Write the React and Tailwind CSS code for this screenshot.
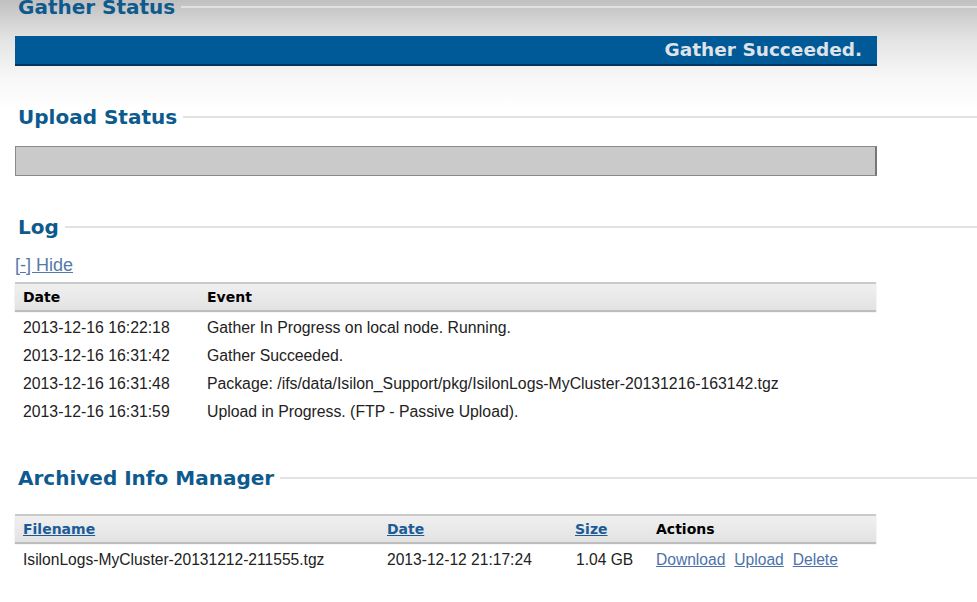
import React from 'react';

const heading = { fontFamily: '"DejaVu Sans", Verdana, sans-serif' };
const body = { fontFamily: '"Liberation Sans", Tahoma, Arial, sans-serif' };

const SectionTitle = ({ children, className = '' }) => (
	<div className={`flex items-center h-6 ${className}`}>
		<h2 style={heading} className="pl-[3px] pr-[6px] text-[20px] font-bold leading-6 text-[#0d5a8e] whitespace-nowrap">
			{children}
		</h2>
		<div className="flex-1 h-[2px] bg-[#e2e2e2]" />
	</div>
);

const TableHead = ({ children }) => (
	<div
		style={heading}
		className="flex w-[861px] h-[28px] items-center border-t-2 border-[#c9c9c9] bg-gradient-to-b from-[#f0f0f0] to-[#e3e3e3] shadow-[0_2px_1px_#bdbdbd] text-[14px] font-bold text-black"
	>
		{children}
	</div>
);

const logRows = [
	['2013-12-16 16:22:18', 'Gather In Progress on local node. Running.'],
	['2013-12-16 16:31:42', 'Gather Succeeded.'],
	['2013-12-16 16:31:48', 'Package: /ifs/data/Isilon_Support/pkg/IsilonLogs-MyCluster-20131216-163142.tgz'],
	['2013-12-16 16:31:59', 'Upload in Progress. (FTP - Passive Upload).'],
];

export default function App() {
	return (
		<div className="min-h-[602px] w-[977px] overflow-hidden bg-[linear-gradient(to_bottom,#c0c0c0_0px,#e4e4e4_40px,#f8f8f8_80px,#ffffff_110px)]">
			<div className="pl-[15px]">
				{/* Gather Status */}
				<SectionTitle className="mt-[-5px]">Gather Status</SectionTitle>
				<div className="mt-[17px] w-[862px] h-[30px] bg-[#005a97] border-b-2 border-[#00365e] flex items-center justify-end pr-[15px]">
					<span style={heading} className="text-[18.5px] font-bold text-[#dfe3e8]">Gather Succeeded.</span>
				</div>

				{/* Upload Status */}
				<SectionTitle className="mt-[39px]">Upload Status</SectionTitle>
				<div className="mt-[17px] w-[862px] h-[30px] bg-[#cacaca] border border-[#8a8a8a] border-r-2 border-r-[#777]" />

				{/* Log */}
				<SectionTitle className="mt-[39px]">Log</SectionTitle>
				<div className="mt-[16px] h-5 leading-5">
					<a href="#" style={body} className="text-[18px] text-[#5679ab] underline">[-] Hide</a>
				</div>
				<div className="mt-[7px]">
					<TableHead>
						<div className="w-[192px] pl-2">Date</div>
						<div className="flex-1">Event</div>
					</TableHead>
					<div className="mt-1">
						{logRows.map(([date, event]) => (
							<div key={date} style={body} className="flex h-[28px] items-center text-[15.8px] text-[#222]">
								<div className="w-[192px] pl-2">{date}</div>
								<div className="flex-1 whitespace-nowrap">{event}</div>
							</div>
						))}
					</div>
				</div>

				{/* Archived Info Manager */}
				<SectionTitle className="mt-[40px]">Archived Info Manager</SectionTitle>
				<div className="mt-[24px]">
					<TableHead>
						<div className="w-[372px] pl-2"><a href="#" className="underline text-[#1b5c98]">Filename</a></div>
						<div className="w-[188px]"><a href="#" className="underline text-[#1b5c98]">Date</a></div>
						<div className="w-[81px]"><a href="#" className="underline text-[#1b5c98]">Size</a></div>
						<div className="flex-1">Actions</div>
					</TableHead>
					<div style={body} className="mt-1 flex h-[28px] items-center text-[15.6px] text-[#222]">
						<div className="w-[372px] pl-2 whitespace-nowrap">IsilonLogs-MyCluster-20131212-211555.tgz</div>
						<div className="w-[188px]">2013-12-12 21:17:24</div>
						<div className="w-[81px] pl-px">1.04 GB</div>
						<div className="flex gap-[9px] text-[#4c72aa]">
							<a href="#" className="underline">Download</a>
							<a href="#" className="underline">Upload</a>
							<a href="#" className="underline">Delete</a>
						</div>
					</div>
				</div>
			</div>
		</div>
	);
}
